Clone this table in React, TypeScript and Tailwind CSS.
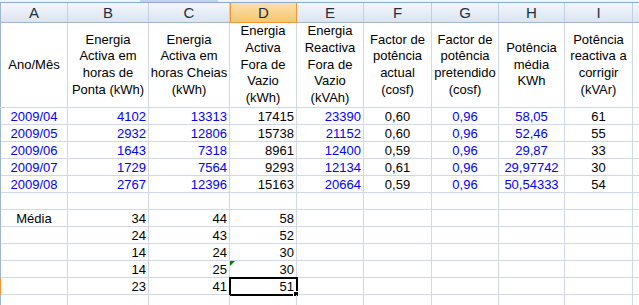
const W = [
  "w-[67px]",
  "w-[81px]",
  "w-[81px]",
  "w-[67px]",
  "w-[67px]",
  "w-[68px]",
  "w-[67px]",
  "w-[66px]",
  "w-[68px]",
];

const LETTERS = ["A", "B", "C", "D", "E", "F", "G", "H", "I"];

const HEAD: string[][] = [
  ["Ano/Mês"],
  ["Energia", "Activa em", "horas de", "Ponta (kWh)"],
  ["Energia", "Activa em", "horas Cheias", "(kWh)"],
  ["Energia", "Activa", "Fora de", "Vazio", "(kWh)"],
  ["Energia", "Reactiva", "Fora de", "Vazio", "(kVAh)"],
  ["Factor de", "potência", "actual", "(cosf)"],
  ["Factor de", "potência", "pretendido", "(cosf)"],
  ["Potência", "média", "KWh"],
  ["Potência", "reactiva a", "corrigir", "(kVAr)"],
];

const DATA = [
  ["2009/04", "4102", "13313", "17415", "23390", "0,60", "0,96", "58,05", "61"],
  ["2009/05", "2932", "12806", "15738", "21152", "0,60", "0,96", "52,46", "55"],
  ["2009/06", "1643", "7318", "8961", "12400", "0,59", "0,96", "29,87", "33"],
  ["2009/07", "1729", "7564", "9293", "12134", "0,61", "0,96", "29,97742", "30"],
  ["2009/08", "2767", "12396", "15163", "20664", "0,59", "0,96", "50,54333", "54"],
];

// per column: text colour and alignment for the data block
const DATA_COLOR = [
  "text-[#0000ff]",
  "text-[#0000ff]",
  "text-[#0000ff]",
  "text-black",
  "text-[#0000ff]",
  "text-black",
  "text-[#0000ff]",
  "text-[#0000ff]",
  "text-black",
];
const DATA_ALIGN = [
  "justify-center",
  "justify-end pr-[2px]",
  "justify-end pr-[2px]",
  "justify-end pr-[2px]",
  "justify-end pr-[2px]",
  "justify-center",
  "justify-center",
  "justify-center",
  "justify-center",
];

const MEDIA = [
  ["Média", "34", "44", "58"],
  ["", "24", "43", "52"],
  ["", "14", "24", "30"],
  ["", "14", "25", "30"],
  ["", "23", "41", "51"],
];

function Cell({
  i,
  children,
  className = "",
}: {
  i: number;
  children?: React.ReactNode;
  className?: string;
}) {
  return (
    <div
      className={`${W[i]} relative flex h-full shrink-0 items-center whitespace-nowrap border-r border-[#d0d7e5] ${className}`}
    >
      {children}
    </div>
  );
}

function Row({
  children,
  selected = false,
}: {
  children: React.ReactNode;
  selected?: boolean;
}) {
  return (
    <div className="flex h-[17px] border-b border-[#d0d7e5]">
      <div
        className={`h-[17px] w-px shrink-0 ${selected ? "bg-[#f29536]" : "bg-[#9eb6ce]"}`}
      />
      {children}
      <div className="flex-1" />
    </div>
  );
}

export default function App() {
  return (
    <div
      className="h-[305px] w-[639px] overflow-hidden bg-white text-[13px] leading-none text-black"
      style={{ fontFamily: '"Liberation Sans", Arial, sans-serif' }}
    >
      {/* top strip */}
      <div className="flex h-[3px] border-b border-[#8eaad4] bg-[#eef3fa]">
        <div className="ml-[140px] h-[2px] w-[78px] bg-[#c3d3ea]" />
      </div>

      {/* column letters */}
      <div className="flex h-[20px] border-b border-[#9eb6ce] bg-gradient-to-b from-[#f4f7fc] to-[#dbe4f0] text-[15px] text-[#1f2d44]">
        <div className="w-px shrink-0 bg-[#9eb6ce]" />
        {LETTERS.map((l, i) =>
          i === 3 ? (
            <div
              key={l}
              className={`${W[i]} -mb-px flex shrink-0 items-center justify-center border-x border-b border-[#f29536] bg-gradient-to-b from-[#fbe0aa] to-[#f4c76e]`}
            >
              {l}
            </div>
          ) : (
            <div
              key={l}
              className={`${W[i]} flex shrink-0 items-center justify-center border-r border-[#c0cfe2]`}
            >
              {l}
            </div>
          )
        )}
        <div className="flex-1" />
      </div>

      {/* header texts */}
      <div className="flex h-[85px] border-b border-[#d0d7e5]">
        <div className="w-px shrink-0 bg-[#9eb6ce]" />
        {HEAD.map((lines, i) => (
          <Cell key={i} i={i} className="flex-col justify-center text-center leading-[16.67px]">
            {lines.map((t) => (
              <span key={t}>{t}</span>
            ))}
          </Cell>
        ))}
        <div className="flex-1" />
      </div>

      {DATA.map((r) => (
        <Row key={r[0]}>
          {r.map((v, i) => (
            <Cell key={i} i={i} className={`${DATA_ALIGN[i]} ${DATA_COLOR[i]}`}>
              {v}
            </Cell>
          ))}
        </Row>
      ))}

      <Row>
        {W.map((_, i) => (
          <Cell key={i} i={i} />
        ))}
      </Row>

      {MEDIA.map((r, ri) => (
        <Row key={ri} selected={ri === 4}>
          {W.map((_, i) => (
            <Cell
              key={i}
              i={i}
              className={i === 0 ? "justify-center" : "justify-end pr-[2px]"}
            >
              {r[i] ?? ""}
              {ri === 3 && i === 3 && (
                <span className="absolute left-0 top-0 h-0 w-0 border-r-[5px] border-t-[5px] border-r-transparent border-t-[#008000]" />
              )}
              {ri === 4 && i === 3 && (
                <>
                  <span className="pointer-events-none absolute -left-[1px] -top-[1px] h-[19px] w-[69px] border-2 border-black" />
                  <span className="absolute -bottom-[3px] -right-[3px] h-[6px] w-[6px] border border-white bg-black" />
                </>
              )}
            </Cell>
          ))}
        </Row>
      ))}

      <Row>
        {W.map((_, i) => (
          <Cell key={i} i={i} />
        ))}
      </Row>
    </div>
  );
}
